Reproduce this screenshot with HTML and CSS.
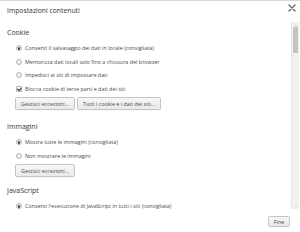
FILE: index.html
```html
<!DOCTYPE html>
<html lang="it">
<head>
  <meta charset="UTF-8">
  <title>Impostazioni contenuti</title>
  <link rel="stylesheet" href="styles.css">
</head>
<body>
  <div class="dialog">
    <div class="dialog-header">
      <h1 class="dialog-title">Impostazioni contenuti</h1>
      <button class="close-btn" aria-label="Chiudi">
        <svg width="8" height="8" viewBox="0 0 8 8">
          <path d="M1 1L7 7M7 1L1 7" stroke="#6b6b6b" stroke-width="1.4" stroke-linecap="round"/>
        </svg>
      </button>
    </div>

    <div class="dialog-body">
      <div class="settings-pane">
        <section class="setting-section">
          <h2 class="section-title">Cookie</h2>
          <label class="option"><span class="radio checked"></span>Consenti il salvataggio dei dati in locale (consigliata)</label>
          <label class="option"><span class="radio"></span>Memorizza dati locali solo fino a chiusura del browser</label>
          <label class="option"><span class="radio"></span>Impedisci ai siti di impostare dati</label>
          <label class="option"><span class="checkbox checked"></span>Blocca cookie di terze parti e dati dei siti</label>
          <div class="button-row">
            <button class="btn">Gestisci eccezioni...</button>
            <button class="btn">Tutti i cookie e i dati dei siti...</button>
          </div>
        </section>

        <section class="setting-section">
          <h2 class="section-title">Immagini</h2>
          <label class="option"><span class="radio checked"></span>Mostra tutte le immagini (consigliata)</label>
          <label class="option"><span class="radio"></span>Non mostrare le immagini</label>
          <div class="button-row">
            <button class="btn">Gestisci eccezioni...</button>
          </div>
        </section>

        <section class="setting-section">
          <h2 class="section-title">JavaScript</h2>
          <label class="option"><span class="radio checked"></span>Consenti l'esecuzione di JavaScript in tutti i siti (consigliata)</label>
        </section>
      </div>

      <div class="scrollbar">
        <span class="arrow arrow-up"></span>
        <div class="scroll-track">
          <div class="scroll-thumb"></div>
        </div>
        <span class="arrow arrow-down"></span>
      </div>
    </div>

    <div class="dialog-footer">
      <button class="btn btn-done">Fine</button>
    </div>
  </div>
</body>
</html>
```

FILE: styles.css
```css
:root {
  --text-primary: #333333;
  --text-secondary: #4a4a4a;
  --border-light: #d9d9d9;
  --scroll-track: #f1f1f1;
  --scroll-thumb: #c3c3c3;
}

* {
  margin: 0;
  padding: 0;
  box-sizing: border-box;
}

body {
  font-family: "Open Sans", "Liberation Sans", sans-serif;
  background: #ffffff;
  color: var(--text-primary);
  width: 300px;
  height: 232px;
  overflow: hidden;
}

.dialog {
  display: flex;
  flex-direction: column;
  height: 232px;
  border-top: 1px solid var(--border-light);
}

.dialog-header {
  height: 21px;
  display: flex;
  align-items: center;
  justify-content: space-between;
  padding: 0 3px 2px 7px;
}

.dialog-title {
  font-size: 6.8px;
  font-weight: 400;
  color: var(--text-primary);
}

.close-btn {
  border: none;
  background: none;
  display: flex;
  align-self: flex-start;
  margin-top: 3px;
  margin-right: 1px;
}

.dialog-body {
  flex: 1;
  display: flex;
  overflow: hidden;
}

.settings-pane {
  flex: 1;
  padding: 5px 0 0 7px;
  overflow: hidden;
}

.setting-section {
  margin-bottom: 11px;
}

.setting-section:nth-child(2) {
  margin-bottom: 8px;
}

.section-title {
  font-size: 7px;
  font-weight: 400;
  line-height: 12px;
  color: var(--text-primary);
  margin-bottom: 2.5px;
}

.option {
  display: flex;
  align-items: center;
  height: 13.5px;
  padding-left: 9px;
  font-size: 5.4px;
  color: var(--text-secondary);
  white-space: nowrap;
}

.radio,
.checkbox {
  width: 6px;
  height: 6px;
  margin-right: 3px;
  flex-shrink: 0;
  border: 0.6px solid #b5b5b5;
  background: linear-gradient(#fafafa, #e6e6e6);
  display: flex;
  align-items: center;
  justify-content: center;
}

.radio {
  border-radius: 50%;
}

.radio.checked::after {
  content: "";
  width: 2.6px;
  height: 2.6px;
  border-radius: 50%;
  background: #444444;
}

.checkbox {
  border-radius: 1px;
}

.checkbox.checked::after {
  content: "";
  width: 1.6px;
  height: 3px;
  border: solid #333333;
  border-width: 0 0.9px 0.9px 0;
  transform: translateY(-0.5px) rotate(40deg);
}

.button-row {
  display: flex;
  gap: 2px;
  padding-left: 8px;
  margin-top: 1.5px;
}

.btn {
  font-family: inherit;
  height: 13px;
  padding: 0 5px;
  font-size: 5.4px;
  color: var(--text-secondary);
  border: 0.7px solid #c4c4c4;
  border-radius: 1.5px;
  background: linear-gradient(#f7f7f7, #e9e9e9);
  box-shadow: 0 0.5px 0.5px rgba(0, 0, 0, 0.06);
}

.scrollbar {
  width: 8px;
  margin-right: 1px;
  display: flex;
  flex-direction: column;
  align-items: center;
  background: var(--scroll-track);
  border-left: 0.5px solid #e4e4e4;
  margin-bottom: 3px;
}

.arrow {
  width: 0;
  height: 0;
  border-left: 1.6px solid transparent;
  border-right: 1.6px solid transparent;
  margin: 2.5px 0 1.5px;
}

.arrow-up {
  border-bottom: 1.8px solid #a3a3a3;
}

.arrow-down {
  border-top: 1.8px solid #a3a3a3;
  margin: 1.5px 0 2.5px;
}

.scroll-track {
  flex: 1;
  width: 100%;
  padding: 0 1px;
}

.scroll-thumb {
  height: 26px;
  background: var(--scroll-thumb);
  border-radius: 0.5px;
}

.dialog-footer {
  height: 20px;
  display: flex;
  justify-content: flex-end;
  align-items: flex-start;
  padding: 4px 10px 0 0;
}

.btn-done {
  height: 11px;
  width: 22px;
  padding: 0;
}
```
